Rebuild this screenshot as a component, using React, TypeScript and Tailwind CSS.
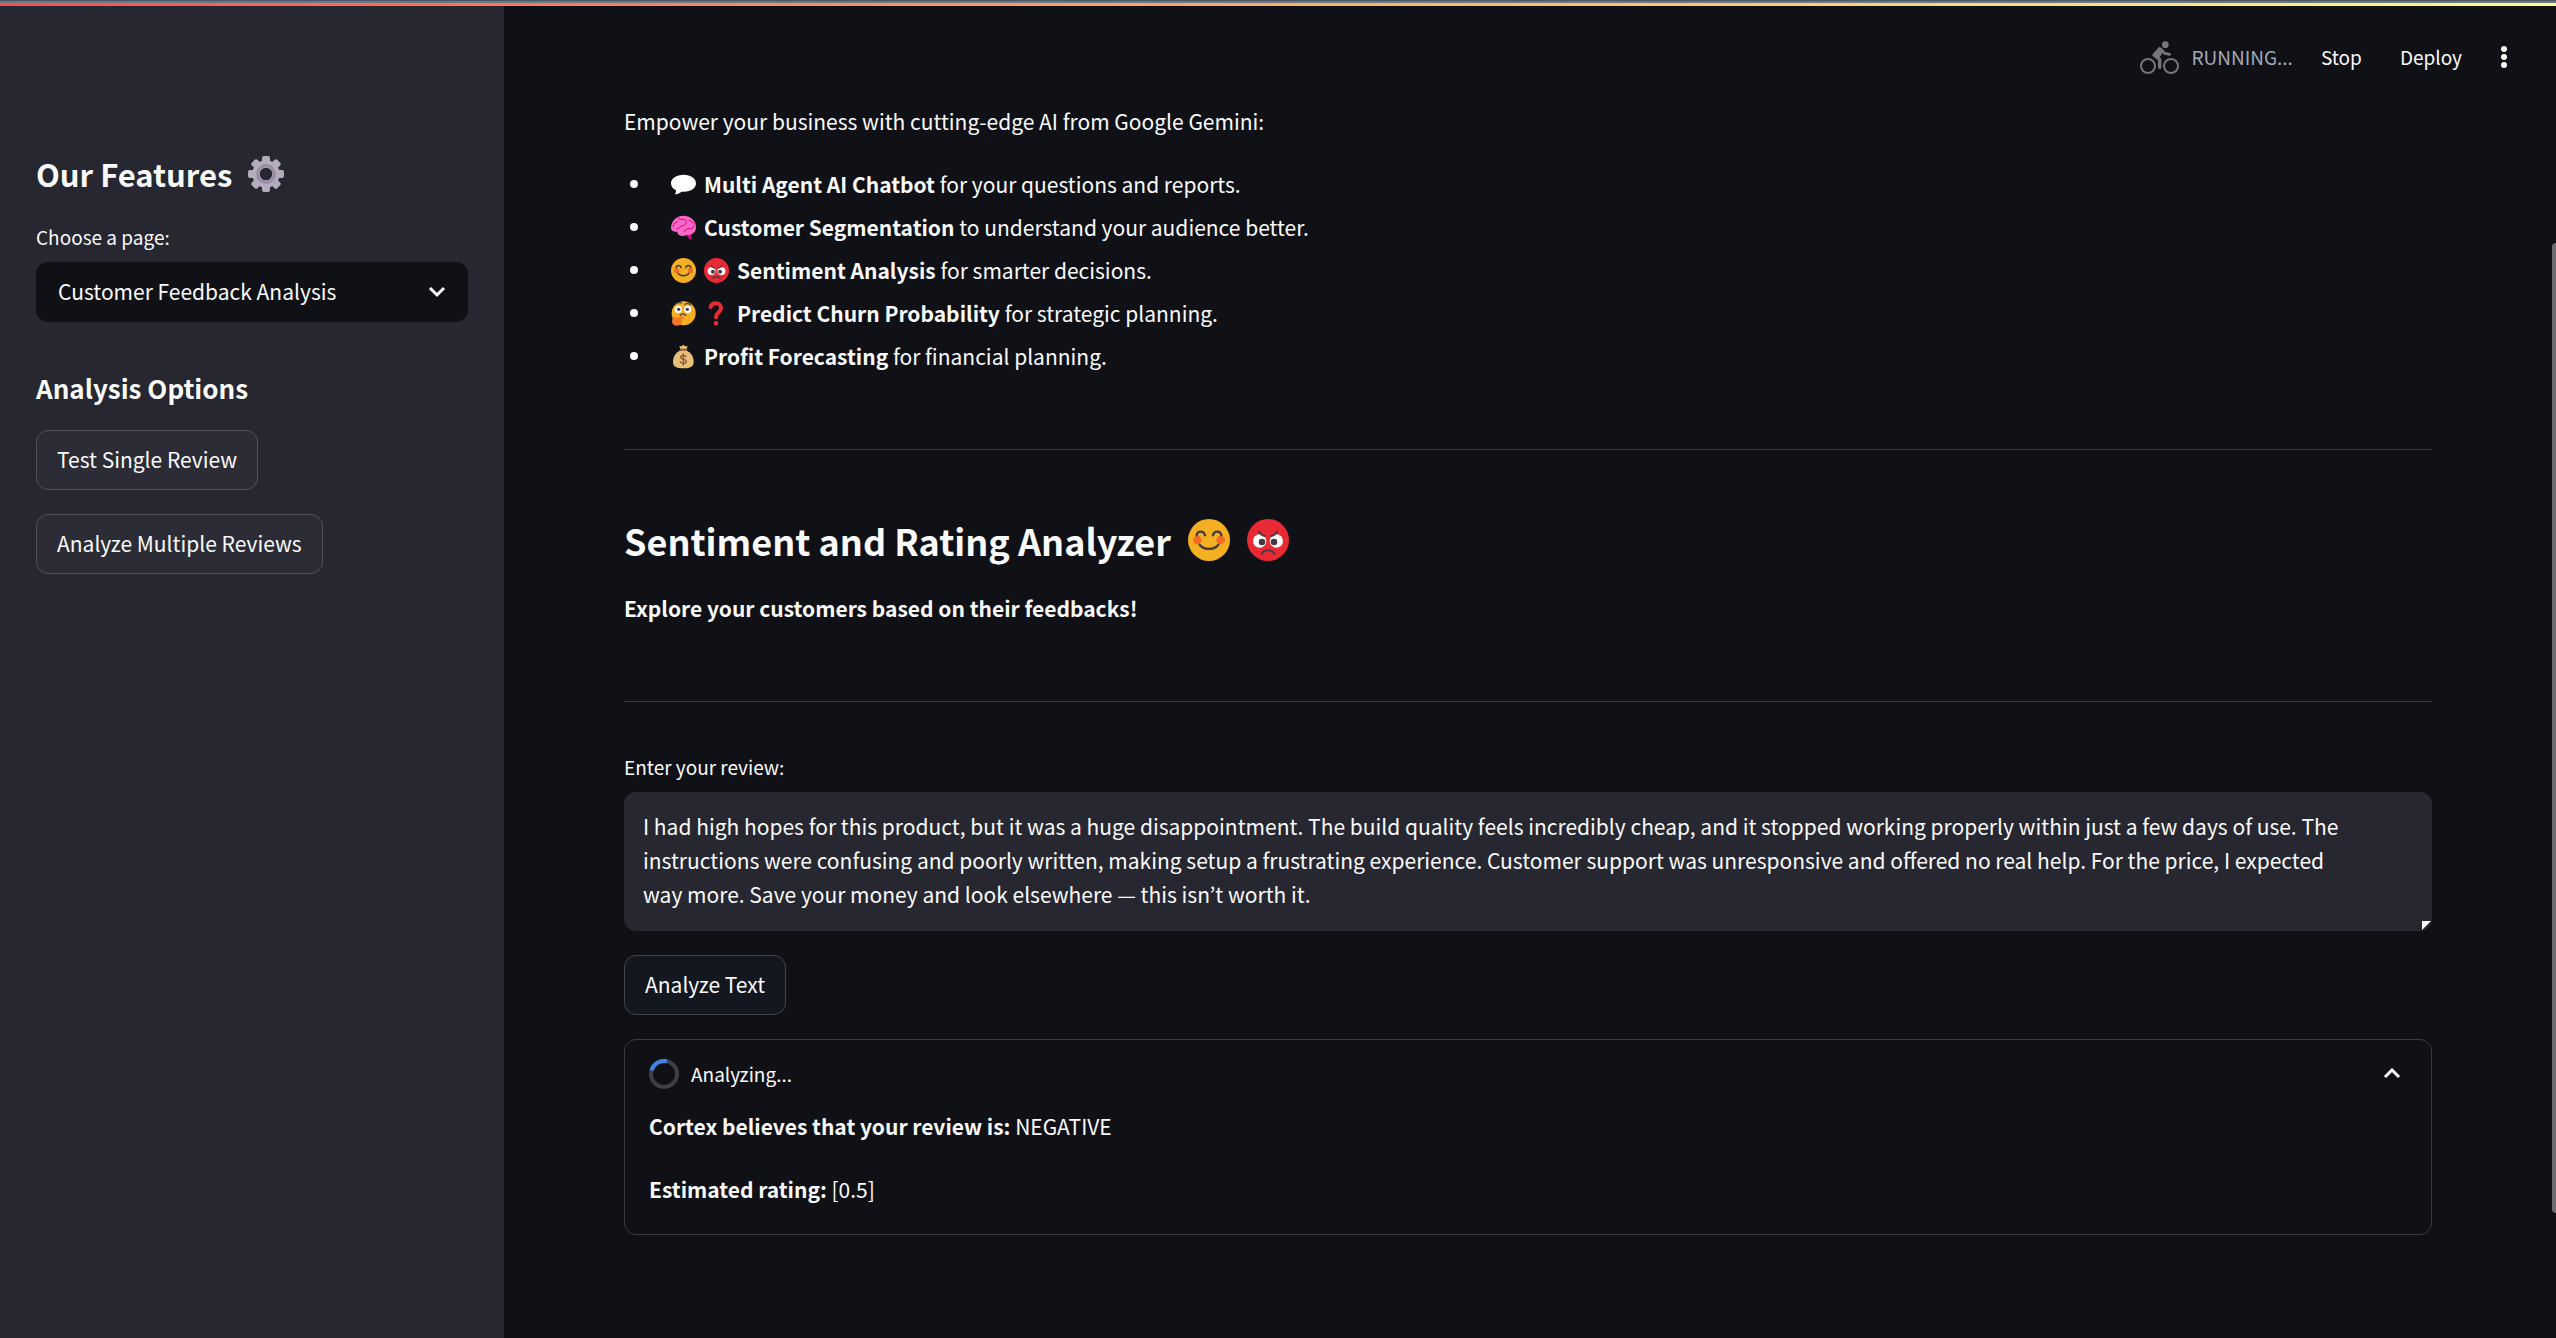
import type { ReactNode } from "react";

const reviewText =
  "I had high hopes for this product, but it was a huge disappointment. The build quality feels incredibly cheap, and it stopped working properly within just a few days of use. The instructions were confusing and poorly written, making setup a frustrating experience. Customer support was unresponsive and offered no real help. For the price, I expected way more. Save your money and look elsewhere — this isn’t worth it.";

function Gear() {
  const teeth = [0, 45, 90, 135, 180, 225, 270, 315];
  return (
    <svg className="size-9 shrink-0" viewBox="0 0 108 108" aria-hidden="true">
      <g fill="#b4acbc">
        {teeth.map((a) => (
          <rect key={a} x="42" y="0" width="24" height="34" rx="6" transform={`rotate(${a} 54 54)`} />
        ))}
      </g>
      <circle cx="54" cy="54" r="30" fill="none" stroke="#b4acbc" strokeWidth="22" />
      <circle cx="54" cy="54" r="25" fill="none" stroke="#998ea4" strokeWidth="10" />
    </svg>
  );
}

function Cyclist() {
  return (
    <svg className="h-[33px] w-10" viewBox="0 0 120 99" fill="none" stroke="#75757a" aria-hidden="true">
      <circle cx="24" cy="75" r="21" strokeWidth="6" />
      <circle cx="93" cy="75" r="21" strokeWidth="6" />
      <circle cx="76" cy="11" r="10" fill="#75757a" stroke="none" />
      <path d="M58 24 42 42l17 13v24" strokeWidth="10" strokeLinecap="round" strokeLinejoin="round" />
      <path d="M58 22 44 42l12 6 12-18z" fill="#75757a" strokeWidth="6" strokeLinejoin="round" />
      <path d="m63 24 11 13 15 3" strokeWidth="8" strokeLinecap="round" strokeLinejoin="round" />
    </svg>
  );
}

function Bubble() {
  return (
    <svg className="size-[25px]" viewBox="0 0 75 75" fill="#fff" aria-hidden="true">
      <path d="M38 8C16 8 0 19 0 34c0 9 6 17 15 21 0 5-1 9-3 12 8 0 15-4 19-8 26 3 44-9 44-25C75 19 59 8 38 8z" />
    </svg>
  );
}

function Brain() {
  return (
    <svg className="size-[25px]" viewBox="0 0 75 75" aria-hidden="true">
      <path d="M46 56c2 10 7 15 16 18l-2-20z" fill="#e3008c" />
      <path d="M36 2C16 2 0 20 0 38c0 9 9 13 18 12 2 12 16 17 28 10 16 1 29-6 29-24C75 16 57 2 36 2z" fill="#f868c4" />
      <g fill="none" stroke="#d3008a" strokeWidth="3" strokeLinecap="round">
        <path d="M7 34c0-8 5-13 12-14M22 10c8 7 18 0 24 7M18 42c9-2 10-9 17-10s10-5 11-11M40 50c2-7 9-10 17-9s12-4 12-10M54 16c7 1 9 6 14 9" />
      </g>
    </svg>
  );
}

function Smile({ className }: { className: string }) {
  return (
    <svg className={className} viewBox="0 0 126 126" aria-hidden="true">
      <circle cx="63" cy="63" r="63" fill="#f4af22" />
      <circle cx="28" cy="63" r="13" fill="#f76a24" />
      <circle cx="98" cy="63" r="13" fill="#f76a24" />
      <g fill="none" stroke="#433b40" strokeWidth="7" strokeLinecap="round">
        <path d="M26 49c2-15 22-15 25 0M75 49c3-15 23-15 25 0M35 77c13 17 43 17 56 0" />
      </g>
    </svg>
  );
}

function Angry({ className }: { className: string }) {
  return (
    <svg className={className} viewBox="0 0 126 126" aria-hidden="true">
      <circle cx="63" cy="63" r="63" fill="#e92a35" />
      <circle cx="38" cy="66" r="20" fill="#fff" />
      <circle cx="88" cy="66" r="20" fill="#fff" />
      <path d="M36 40 63 56 90 40 82 30H44z" fill="#e92a35" />
      <circle cx="45" cy="69" r="10" fill="#433b40" />
      <circle cx="81" cy="69" r="10" fill="#433b40" />
      <g fill="none" stroke="#433b40" strokeWidth="6" strokeLinecap="round">
        <path d="M36 38c3 7 9 11 17 13M90 38c-3 7-9 11-17 13M44 104c8-14 30-14 38 0" />
      </g>
    </svg>
  );
}

function Thinking() {
  return (
    <svg className="size-[25px]" viewBox="0 0 75 75" aria-hidden="true">
      <circle cx="38" cy="37" r="36" fill="#f4af22" />
      <circle cx="22" cy="25" r="11" fill="#fff" />
      <circle cx="50" cy="25" r="11" fill="#fff" />
      <circle cx="23" cy="25" r="5" fill="#433b40" />
      <circle cx="49" cy="25" r="5" fill="#433b40" />
      <g fill="none" stroke="#433b40" strokeWidth="4" strokeLinecap="round">
        <path d="M14 9c5-5 12-5 17-3M42 10c6-4 12-3 16 1M28 43c4-6 12-6 16 0" />
      </g>
      <path d="M5 49c5-5 9 2 13 2l14-5c6-1 7 5 2 8l-6 3c8 1 6 9 1 13-9 8-25 4-26-8z" fill="#f3772b" />
    </svg>
  );
}

function Question() {
  return (
    <svg className="size-[25px]" viewBox="0 0 75 75" aria-hidden="true">
      <path d="M20 18C25 2 51 4 51 21c0 13-15 13-15 28" fill="none" stroke="#e92a35" strokeWidth="12" strokeLinecap="round" />
      <circle cx="36" cy="67" r="7" fill="#e92a35" />
    </svg>
  );
}

function MoneyBag() {
  return (
    <svg className="size-[25px]" viewBox="0 0 75 75" aria-hidden="true">
      <path d="M25 5c5 4 7 1 12-3 5 4 8 7 13 3l-4 14H29z" fill="#e8bf79" />
      <path d="M29 19C14 25 6 40 6 53c0 14 9 20 31 20s31-6 31-20c0-13-8-28-23-34z" fill="#e8bf79" />
      <path d="M28 17h19" stroke="#8c5543" strokeWidth="5" strokeLinecap="round" />
      <path d="M45 38c-3-6-16-5-16 2 0 8 17 4 17 12 0 8-15 8-18 1M37 29v35" fill="none" stroke="#8c5543" strokeWidth="4" strokeLinecap="round" />
    </svg>
  );
}

const features: { icons: ReactNode; name: string; rest: string }[] = [
  { icons: <Bubble />, name: "Multi Agent AI Chatbot", rest: " for your questions and reports." },
  { icons: <Brain />, name: "Customer Segmentation", rest: " to understand your audience better." },
  {
    icons: (
      <>
        <Smile className="size-[25px]" />
        <Angry className="size-[25px]" />
      </>
    ),
    name: "Sentiment Analysis",
    rest: " for smarter decisions.",
  },
  {
    icons: (
      <>
        <Thinking />
        <Question />
      </>
    ),
    name: "Predict Churn Probability",
    rest: " for strategic planning.",
  },
  { icons: <MoneyBag />, name: "Profit Forecasting", rest: " for financial planning." },
];

function Sidebar() {
  return (
    <aside className="w-[504px] shrink-0 bg-[#262730] px-9 pt-[150px]">
      <h2 className="flex items-center gap-4 text-[31px] leading-[48px] font-semibold">
        Our Features
        <Gear />
      </h2>
      <label htmlFor="page" className="mt-6 block text-[19px] leading-[30px]">
        Choose a page:
      </label>
      <div className="relative mt-2.5">
        <select
          id="page"
          className="h-[60px] w-full appearance-none rounded-xl bg-[#0f1116] pr-14 pl-[22px] text-[21px]"
          defaultValue="feedback"
        >
          <option value="feedback">Customer Feedback Analysis</option>
        </select>
        <svg
          className="pointer-events-none absolute top-6 right-[22px] h-3 w-[18px]"
          viewBox="0 0 18 12"
          fill="none"
          stroke="#fafafa"
          strokeWidth="3"
          aria-hidden="true"
        >
          <path d="m2 2 7 7 7-7" />
        </svg>
      </div>
      <h3 className="mt-[47px] text-[26px] leading-[38px] font-semibold">Analysis Options</h3>
      <div className="mt-[23px] flex flex-col items-start gap-6">
        <button className="h-[60px] rounded-xl border border-[#4f5058] bg-[#2b2c36] px-5 text-[21px]">
          Test Single Review
        </button>
        <button className="h-[60px] rounded-xl border border-[#4f5058] bg-[#2b2c36] px-5 text-[21px]">
          Analyze Multiple Reviews
        </button>
      </div>
    </aside>
  );
}

function Toolbar() {
  return (
    <header className="flex h-[102px] items-center justify-end pt-3 pr-9 text-[19px]">
      <Cyclist />
      <span className="ml-[11px] text-[#a3a8b8]">RUNNING...</span>
      <button className="ml-7">Stop</button>
      <button className="ml-[38px]">Deploy</button>
      <button className="ml-[30px]" aria-label="Main menu">
        <svg className="h-6 w-6" viewBox="0 0 24 24" fill="#fafafa" aria-hidden="true">
          <circle cx="12" cy="4" r="3" />
          <circle cx="12" cy="12" r="3" />
          <circle cx="12" cy="20" r="3" />
        </svg>
      </button>
    </header>
  );
}

export default function App() {
  return (
    <div className="flex min-h-screen flex-col bg-[#0f1116] font-['Noto_Sans_CJK_KR','Noto_Sans',sans-serif] text-[#fafafa]">
      <div className="absolute inset-x-0 top-0">
        <div className="h-px bg-[#4b5863]" />
        <div className="h-0.5 bg-[#6c7883]" />
        <div className="h-[3px] bg-linear-to-r from-[#ff4b4b] to-[#fffd80]" />
      </div>
      <div className="flex flex-1">
        <Sidebar />
        <div className="min-w-0 flex-1">
          <Toolbar />
          <main className="px-[120px] text-[21px] leading-[38px]">
            <p>Empower your business with cutting-edge AI from Google Gemini:</p>
            <ul className="mt-[25px] flex flex-col gap-[5px] pl-1.5">
              {features.map((f) => (
                <li key={f.name} className="flex items-center gap-2">
                  <span className="mr-[25px] size-2 rounded-full bg-[#fafafa]" />
                  {f.icons}
                  <span>
                    <strong className="font-semibold">{f.name}</strong>
                    {f.rest}
                  </span>
                </li>
              ))}
            </ul>
            <hr className="mt-[74px] border-[#3a3c44]" />
            <h1 className="mt-[65px] flex items-center gap-[17px] text-[36px] leading-[50px] font-semibold">
              Sentiment and Rating Analyzer
              <Smile className="size-[42px]" />
              <Angry className="size-[42px]" />
            </h1>
            <p className="mt-6 font-semibold">Explore your customers based on their feedbacks!</p>
            <hr className="mt-[74px] border-[#3a3c44]" />
            <label htmlFor="review" className="mt-[50px] block text-[19px] leading-[30px]">
              Enter your review:
            </label>
            <div className="relative mt-2.5 overflow-hidden rounded-xl">
              <textarea
                id="review"
                rows={3}
                className="block w-full resize-none overflow-hidden bg-[#262730] pt-[17px] pr-20 pb-5 pl-[19px] leading-[34px]"
                defaultValue={reviewText}
              />
              <svg className="absolute right-px bottom-px size-[9px]" viewBox="0 0 9 9" aria-hidden="true">
                <path d="M0 0h9L0 9z" fill="#fff" />
              </svg>
            </div>
            <button className="mt-6 block h-[60px] rounded-xl border border-[#41444c] bg-[#131720] px-5 pb-0.5">
              Analyze Text
            </button>
            <section className="mt-6 rounded-xl border border-[#3a3c44] px-6 pt-[15px] pb-[26px]">
              <button className="flex w-full items-center text-left text-[19px]" aria-expanded="true">
                <svg className="size-[30px]" viewBox="0 0 30 30" fill="none" strokeWidth="4" aria-hidden="true">
                  <circle cx="15" cy="15" r="13" stroke="#3f4046" />
                  <path d="M2.5 11.5A13 13 0 0 1 18 2.3" stroke="#4181e8" />
                </svg>
                <span className="ml-3 flex-1">Analyzing...</span>
                <svg
                  className="mr-1.5 h-3 w-[18px]"
                  viewBox="0 0 18 12"
                  fill="none"
                  stroke="#fafafa"
                  strokeWidth="3"
                  aria-hidden="true"
                >
                  <path d="m2 9 7-7 7 7" />
                </svg>
              </button>
              <p className="mt-[14px]">
                <strong className="font-semibold">Cortex believes that your review is:</strong> NEGATIVE
              </p>
              <p className="mt-[25px]">
                <strong className="font-semibold">Estimated rating:</strong> [0.5]
              </p>
            </section>
          </main>
        </div>
        <div className="w-1 shrink-0 pt-[243px]">
          <div className="h-[970px] rounded-l-full bg-[#6c6d72]" />
        </div>
      </div>
    </div>
  );
}
